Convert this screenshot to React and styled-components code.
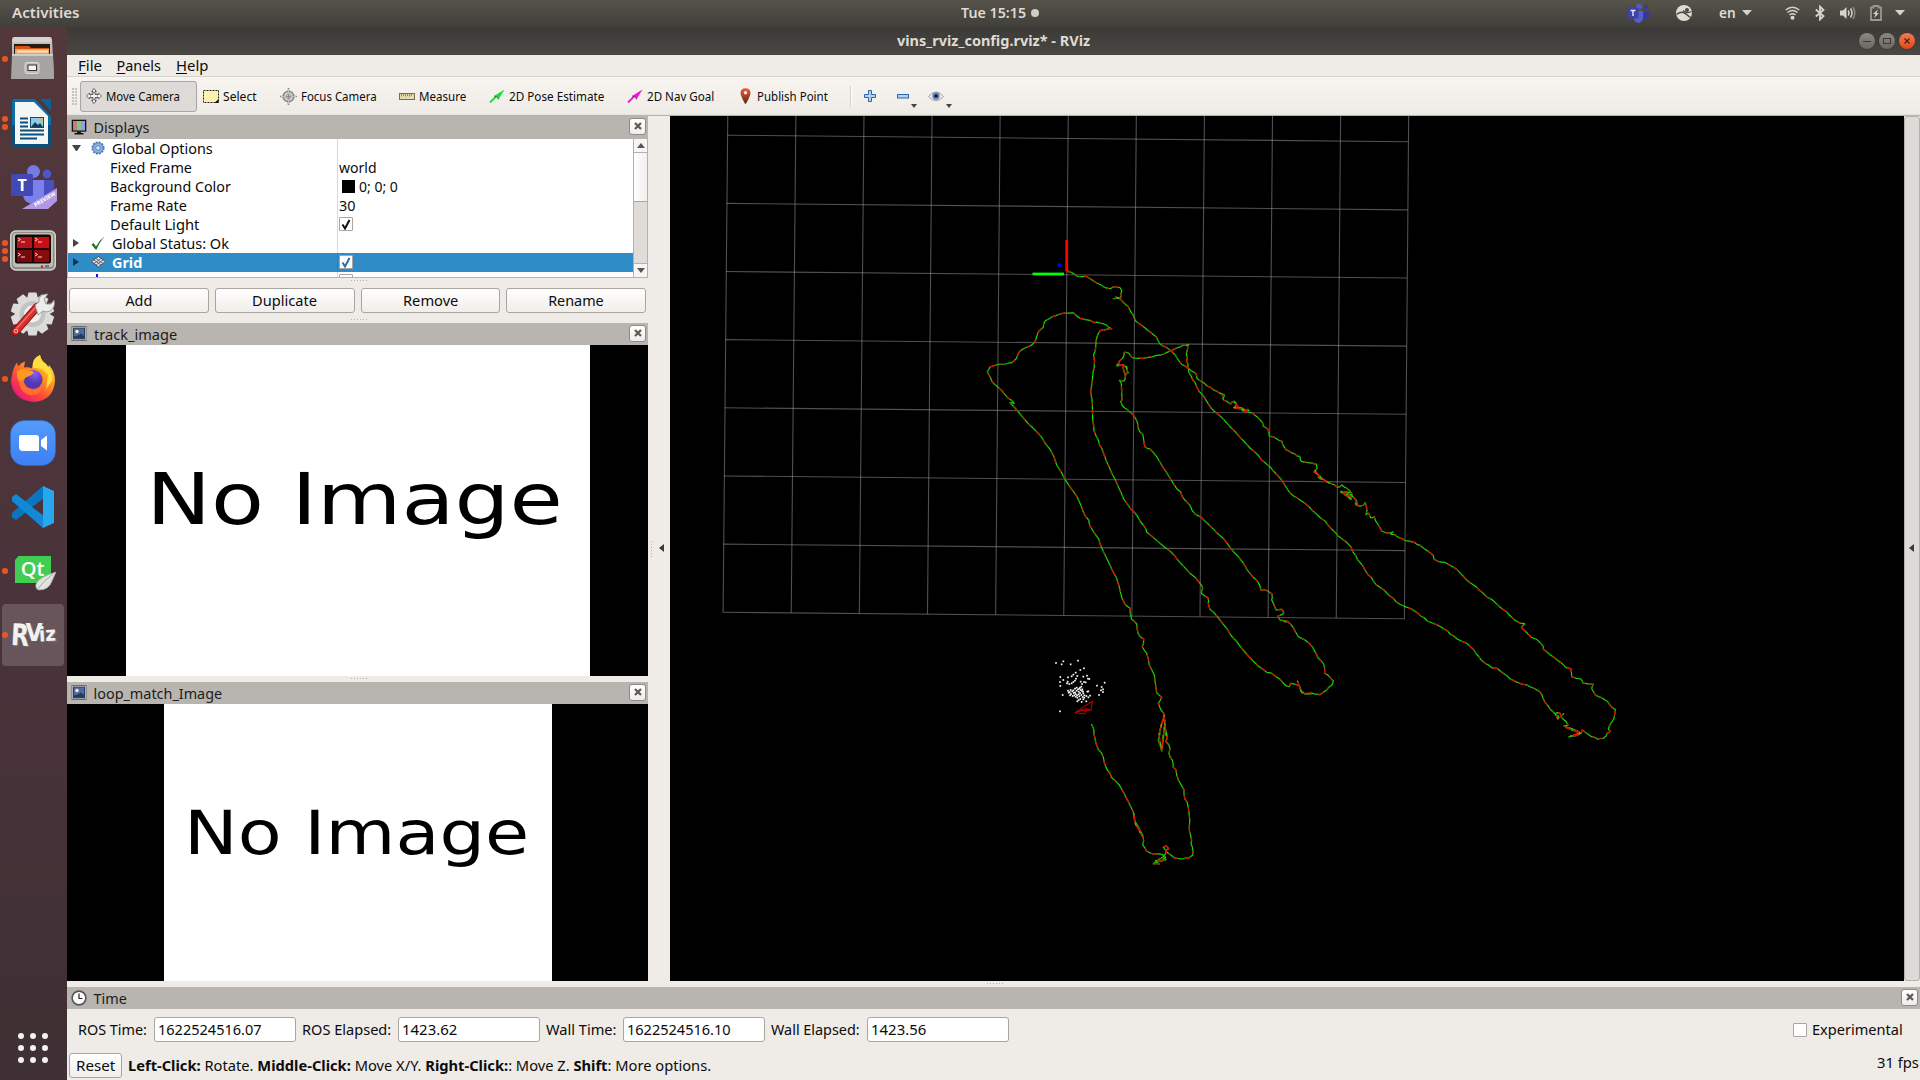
import React, { useLayoutEffect, useRef, useState } from "react";
import styled, { createGlobalStyle, css } from "styled-components";

const Global = createGlobalStyle`
  * { box-sizing: border-box; }
  html, body { margin: 0; padding: 0; background: #000; overflow: hidden; }
  body { font-family: "Noto Sans", "Open Sans", sans-serif; font-size: 14.4px; color: #0c0c0c; }
  svg { display: block; flex: none; }
`;

/* ---------- fitted text ---------- */
const FitBox = styled.span`
  display: inline-block;
  flex: none;
  white-space: pre;
  text-align: left;
`;
const FitInner = styled.span`
  display: inline-block;
  transform-origin: 0 50%;
`;
function Fit({ w, children }) {
  const ref = useRef(null);
  const [scale, setScale] = useState(1);
  useLayoutEffect(() => {
    setScale(w / ref.current.offsetWidth);
  }, [w]);
  return (
    <FitBox style={{ width: w }}>
      <FitInner ref={ref} style={{ transform: `scaleX(${scale})` }}>{children}</FitInner>
    </FitBox>
  );
}

/* ---------- shell ---------- */
const Screen = styled.div`
  width: 1920px;
  height: 1080px;
  display: flex;
  flex-direction: column;
  overflow: hidden;
`;
const TopBar = styled.header`
  height: 27px;
  flex: none;
  display: grid;
  grid-template-columns: 1fr auto 1fr;
  align-items: center;
  background: linear-gradient(#56534a, #403f3a);
  color: #dfdbd2;
  font-size: 13.6px;
  font-weight: 600;
  line-height: 24px;
  padding-bottom: 2px;
`;
const TopLeft = styled.div` padding-left: 12px; `;
const Clock = styled.div`
  display: flex;
  align-items: center;
  gap: 5px;
  margin-left: 80px;
`;
const ClockDot = styled.i`
  width: 8px; height: 8px; border-radius: 50%; background: #d0ccc4; margin-top: 1px;
`;
const Tray = styled.div`
  display: flex;
  align-items: center;
  justify-content: flex-end;
  padding: 1px 15px 0 0;
`;
const TrayItem = styled.span`
  display: flex;
  align-items: center;
  margin-right: ${(p) => p.$gap || 0}px;
`;
const Body = styled.div` flex: 1; display: flex; min-height: 0; `;

/* ---------- dock ---------- */
const Dock = styled.nav`
  width: 67px;
  flex: none;
  display: flex;
  flex-direction: column;
  background: linear-gradient(#53373a, #4a333a 55%, #3e3034);
`;
const DockItem = styled.div`
  height: 64px;
  display: flex;
  align-items: center;
`;
const Pips = styled.div`
  width: 10px;
  display: flex;
  flex-direction: column;
  align-items: center;
  gap: 2.6px;
  position: relative;
  z-index: 1;
  i { width: 5.6px; height: 5.6px; border-radius: 50%; background: #e95420; }
  padding-right: 0.5px;
`;
const DockTile = styled.div`
  width: 62px;
  height: 62px;
  margin-left: -8px;
  padding-left: 8px;
  border-radius: 4px;
  display: flex;
  align-items: center;
  background: ${(p) => (p.$active ? "rgba(255,255,255,0.17)" : "transparent")};
`;
const AppsGrid = styled.div`
  margin: auto 0 17px 18px;
  display: grid;
  grid-template-columns: repeat(3, 6px);
  gap: 6px;
  i { width: 6px; height: 6px; border-radius: 50%; background: #f4f2f0; }
`;

/* ---------- window ---------- */
const Win = styled.main`
  flex: 1;
  display: flex;
  flex-direction: column;
  background: #efebe6;
  min-width: 0;
`;
const TitleBar = styled.div`
  height: 28px;
  display: grid;
  grid-template-columns: 1fr auto 1fr;
  align-items: center;
  background: linear-gradient(#3b3a36, #4a4843);
  color: #dfdbd2;
  font-weight: 700;
  font-size: 14.2px;
  line-height: 27px;
`;
const WinButtons = styled.div`
  display: flex;
  justify-content: flex-end;
  gap: 4px;
  padding-right: 5px;
`;
const RoundBtn = styled.span`
  width: 16px; height: 16px; border-radius: 50%;
  display: flex; align-items: center; justify-content: center;
  background: ${(p) => (p.$close ? "linear-gradient(#f37b55, #df4a16)" : "linear-gradient(#8b8880, #6a6861)")};
  box-shadow: 0 0 0 0.6px #33322e;
`;
const MenuBar = styled.div`
  height: 22px;
  display: flex;
  padding: 0 0 0 10.5px;
  gap: 15px;
  line-height: 22px;
  border-bottom: 1px solid #d6d2ce;
  u { text-underline-offset: 2px; text-decoration-thickness: 1.4px; }
`;
const ToolBar = styled.div`
  height: 39px;
  padding: 1px 0 0 5px;
  display: flex;
  align-items: center;
  background: linear-gradient(#f8f5f1, #eeeae6);
  border-bottom: 1px solid #b8b4b0;
  box-shadow: inset 0 -1px 0 #e6e2de;
  font-size: 12.8px;
  line-height: 20px;
`;
const Grip = styled.div`
  width: 5px;
  height: 17px;
  margin-right: 3px;
  background-image: radial-gradient(circle at 1px 1px, #c6c1bc 0.8px, transparent 1px);
  background-size: 3px 3px;
`;
const Tool = styled.div`
  height: 31px;
  display: flex;
  align-items: center;
  gap: ${(p) => p.$gap || 4}px;
  padding-left: 5px;
  width: ${(p) => p.$w}px;
  flex: none;
  border-radius: 3px;
  border: 1px solid transparent;
  ${(p) => p.$on && css`
    background: #dedad7;
    border-color: #a9a5a1;
  `}
`;
const Separator = styled.div`
  width: 2px; height: 20px; background: #d2cdc8; border-right: 1px solid #fff; margin-right: 12px;
`;
const MiniBtn = styled.div` display: flex; align-items: center; height: 24px; margin-right: ${(p) => p.$gap}px; `;
const Drop = styled.i`
  border: 3px solid transparent; border-top: 4px solid #444; border-bottom: 0;
  align-self: flex-end; margin-bottom: 0; margin-left: 2px;
`;
const Work = styled.div` height: 871px; display: flex; padding-top: 0; `;
const Side = styled.aside` width: 581px; display: flex; flex-direction: column; `;
const PanelHead = styled.div`
  height: ${(p) => p.$h || 22}px;
  flex: none;
  display: flex;
  align-items: center;
  background: #b8b4b0;
  padding: 0 2px ${(p) => (p.$h ? 1 : 0)}px 4px;
  gap: 6px;
  color: #1d1c1b;
`;
const HeadText = styled.div` flex: 1; line-height: 20px; padding-top: 2px; padding-left: 0.5px; `;
const CloseBox = styled.span`
  width: 17px; height: 17px; border-radius: 3px;
  border: 1px solid #8f8b87;
  background: linear-gradient(#fff, #efedeb);
  display: flex; align-items: center; justify-content: center;
  margin-top: -1px;
`;
const Tree = styled.div`
  height: 139px;
  display: flex;
  background: #fff;
  border: 1px solid #b4b0ac;
  border-top: 0;
  overflow: hidden;
`;
const Rows = styled.div` flex: 1; height: 138px; overflow: hidden; `;
const Row = styled.div`
  height: 19px;
  display: flex;
  line-height: 19px;
  ${(p) => p.$sel && css` background: #308cc6; color: #fff; font-weight: 700; `}
`;
const NameCell = styled.div`
  width: 269.500px;
  display: flex;
  align-items: center;
  border-right: 1px solid ${(p) => (p.$sel ? "#2d82b8" : "#d9d9d9")};
  padding-left: ${(p) => (p.$child ? 42 : 4)}px;
  & > span { margin-top: ${(p) => (p.$sel ? 0 : 0.5)}px; }
`;
const ValueCell = styled.div` display: flex; align-items: center; padding-left: 1.5px; gap: 4px; `;
const IconSlot = styled.span` width: 16px; margin: 0 6px 0 9px; display: flex; justify-content: center; `;
const Caret = styled.i`
  width: 8px;
  display: block;
  flex: none;
  ${(p) => p.$open
    ? css` border: 4.5px solid transparent; border-top: 6px solid #444; border-bottom: 0; width: 9px; margin-right: 0; `
    : css` border: 4.5px solid transparent; border-left: 6px solid ${p.$dark ? "#12344a" : "#444"}; border-right: 0; width: 6px; margin: 0 2px 0 1px; `}
`;
const Swatch = styled.i` width: 13px; height: 13px; background: #000; margin-left: 3px; `;
const Check = styled.span`
  width: ${(p) => p.$s || 14}px; height: 14px; border: 1px solid #a9a5a1; background: #fff;
  display: flex; align-items: center; justify-content: center; border-radius: 1px;
`;
const ScrollBar = styled.div`
  width: 14px; display: flex; flex-direction: column; border-left: 1px solid #b4b0ac; background: #dedbd8;
`;
const ScrollEnd = styled.div`
  height: 14px; background: #f8f6f4; display: flex; align-items: center; justify-content: center;
  border-${(p) => (p.$down ? "top" : "bottom")}: 1px solid #b4b0ac;
  i { border: 4px solid transparent; ${(p) => (p.$down ? "border-top: 5px solid #555; border-bottom: 0;" : "border-bottom: 5px solid #555; border-top: 0;")} }
`;
const Thumb = styled.div` height: 49px; background: linear-gradient(90deg, #fff, #f2efed); border-bottom: 1px solid #aaa6a2; `;
const ScrollTrack = styled.div` flex: 1; `;
const Dots = styled.div`
  height: ${(p) => p.$h}px;
  flex: none;
  display: flex;
  justify-content: center;
  padding-top: ${(p) => p.$top || 2}px;
  i { width: 17px; height: 1px; margin-left: 3px; background: repeating-linear-gradient(90deg, #b5b0ab 0 1px, transparent 1px 3px); }
`;
const ButtonRow = styled.div` height: 25px; display: flex; gap: 6px; padding: 0 2px; `;
const Button = styled.div`
  flex: ${(p) => (p.$w ? "none" : 1)};
  width: ${(p) => (p.$w ? p.$w + "px" : "auto")};
  height: 25px;
  border: 1px solid #a9a5a1;
  border-radius: 3px;
  background: linear-gradient(#ffffff, #f0edea);
  display: flex;
  align-items: center;
  justify-content: center;
  padding-top: ${(p) => (p.$w ? 1 : 0)}px;
`;
const ImagePane = styled.div`
  height: ${(p) => p.$h}px;
  background: #000;
  display: flex;
  padding-left: ${(p) => p.$left}px;
`;
const ImageCanvas = styled.div`
  width: ${(p) => p.$w}px;
  height: 100%;
  background: #fff;
  display: flex;
  justify-content: center;
  align-items: flex-start;
  padding-top: ${(p) => p.$top}px;
  padding-right: ${(p) => p.$nudge}px;
  color: #000;
  font: ${(p) => p.$fs}px/1 "DejaVu Sans", sans-serif;
  white-space: nowrap;
  span { transform: scaleX(${(p) => p.$sx}); }
`;
const Collapse = styled.div`
  width: ${(p) => p.$w}px;
  height: 865px;
  flex: none;
  display: flex;
  align-items: center;
  padding-left: ${(p) => p.$pad}px;
  gap: 7px;
  ${(p) => p.$raised && css` background: #dedad7; border: 1px solid #b5b1ad; border-radius: 3px; `}
`;
const VDots = styled.i` width: 1px; height: 17px; margin-top: 3px; background: repeating-linear-gradient(#b5b0ab 0 1px, transparent 1px 3px); `;
const LeftArrow = styled.i` border: 4.5px solid transparent; border-right: 5.5px solid #3a3a3a; border-left: 0; `;
const View = styled.section` width: 1234px; height: 865px; background: #000; flex: none; overflow: hidden; `;
const ViewCol = styled.div` width: 1234px; display: flex; flex-direction: column; `;
const FullDots = styled(Dots)` margin-left: -584px; padding-right: 3px; `;
const TimeRow = styled.div`
  height: 40px;
  margin-top: 1px;
  display: flex;
  align-items: center;
  padding: 1px 17px 0 11px;
`;
const Field = styled.div`
  width: 142px; height: 25px; border: 1px solid #a9a5a1; border-radius: 3px; background: #fff;
  padding: 0 0 0 3px; line-height: 23px; margin: -1px 6px 0 7px; display: flex; flex: none;
`;
const Spacer = styled.div` flex: 1; `;
const CheckLabel = styled.div` display: flex; align-items: center; gap: 5px; `;
const StatusRow = styled.div` height: 31px; display: flex; align-items: center; padding: 1px 0 0 2px; gap: 6px; `;
const Fps = styled.div` padding: 0 1px 6px 0; `;

/* ---------- dock icons ---------- */
const FilesIcon = () => (
  <svg width="46" height="46" viewBox="0 0 46 46">
    <defs><linearGradient id="fi" x1="0" y1="0" x2="0" y2="1"><stop offset="0" stopColor="#c9c8c6" /><stop offset="1" stopColor="#989795" /></linearGradient></defs>
    <path d="M4 1h36q2 0 2 3l2 35q0 4-3 4H4q-3 0-2-4L2 4q0-3 2-3z" fill="url(#fi)" />
    <path d="M5 1h34l3 5H2z" fill="#d5d4d2" />
    <path d="M4 8h36v12H4z" fill="#2b1a12" />
    <path d="M5 10h14l2 2h18v7H5z" fill="#d2561c" />
    <path d="M5 13h34v6H5z" fill="#f2a452" /><path d="M7 14.500h31v2H7z" fill="#fbe3bb" />
    <path d="M2 18h41l1 25H1z" fill="#a5a4a2" /><path d="M2 18h41v2H2z" fill="#cccbc9" />
    <rect x="15" y="26.500" width="14" height="11" rx="2" fill="#bdbcba" stroke="#dddcda" />
    <rect x="18" y="29" width="8.500" height="5.500" fill="#f4f4f4" stroke="#333" />
  </svg>
);
const WriterIcon = () => (
  <svg width="46" height="48" viewBox="0 0 46 48">
    <path d="M5 0h20l16 17v28q0 3-3 3H5q-3 0-3-3V3q0-3 3-3z" fill="#0b4f7c" />
    <path d="M2 3q0-3 3-3h20l16 18v8L2 26z" fill="#0d6ea6" />
    <path d="M30 0h11v12z" fill="#0a639b" />
    <path d="M5 3h19l14 14v28H5z" fill="#f4f5f5" />
    <path d="M10 19.500h8M10 23.500h8M10 27.500h8M10 31.500h24M10 35.500h24M10 39.500h17" stroke="#0b4f7c" strokeWidth="2" />
    <rect x="20.500" y="18.500" width="13" height="10" fill="#8ccbed" stroke="#0b4f7c" />
    <path d="M21 28l4-5 3 3 2-2 3 4z" fill="#133c54" /><circle cx="31" cy="21" r="1.700" fill="#e8b73c" />
  </svg>
);
const TeamsIcon = () => (
  <svg width="48" height="46" viewBox="1 -2 48 46">
    <circle cx="38" cy="8" r="4.400" fill="#4f56c8" /><circle cx="24.500" cy="5.500" r="6.500" fill="#7479e4" />
    <path d="M32 14h13v13q-1 7-7 7l-6-3z" fill="#4a50c0" />
    <path d="M14 14h21v16q-2 8-10 8-9 0-11-8z" fill="#7b80ea" />
    <rect x="2" y="8" width="22" height="22" rx="1.500" fill="#4248b4" />
    <text x="13" y="25" fontSize="16" fontWeight="700" fill="#fff" textAnchor="middle" fontFamily="Noto Sans, sans-serif">T</text>
    <path d="M48 22v13l-9 8H13z" fill="#b197e4" />
    <text transform="translate(26.500 41) rotate(-31)" fontSize="5.400" fontWeight="700" fill="#fff" fontFamily="Noto Sans, sans-serif">PREVIEW</text>
  </svg>
);
const TerminatorIcon = () => (
  <svg width="46" height="42" viewBox="0 0 46 42">
    <rect x="0.800" y="1" width="44.500" height="39" rx="5" fill="#8b8e85" stroke="#d4d5cf" strokeWidth="1.500" />
    <rect x="3" y="3" width="40" height="34" rx="3" fill="#bfc1b9" />
    <rect x="5" y="4.500" width="36" height="29" rx="2" fill="#1c0505" />
    <rect x="7" y="7" width="15" height="11" fill="#b5141a" /><rect x="24" y="7" width="15" height="11" fill="#c90f14" />
    <rect x="7" y="20" width="15" height="12" fill="#760b0d" /><rect x="24" y="20" width="15" height="12" fill="#8b0b0d" />
    <g stroke="#f0d5d5" strokeWidth="1" fill="none">
      <path d="M8 8l2.500 1.500L8 11M11 12h4M25 8l2.500 1.500L25 11M28 12h4M8 23l2.500 1.500L8 26M11 27h4M25 23l2.500 1.500L25 26M28 27h4" />
    </g>
    <circle cx="32" cy="36.500" r="1.200" fill="#e01616" /><rect x="35" y="35" width="4" height="2.500" fill="#777" />
  </svg>
);
const SettingsIcon = () => {
  const teeth = Array.from({ length: 10 }, (_, i) => i * 36);
  return (
    <svg width="46" height="46" viewBox="0 1 46 46">
      <g fill="#dcdcda">
        {teeth.map((a) => <path key={a} d="M18.500 1.500h8l1.500 6h-11z" transform={`rotate(${a} 22.500 23)`} />)}
        <circle cx="22.500" cy="23" r="17" />
      </g>
      <circle cx="22.500" cy="23" r="13" fill="#c3c3c1" /><circle cx="22.500" cy="23" r="8.500" fill="#f1f1f0" />
      <path d="M5 41L27 16" stroke="#8f1414" strokeWidth="8" strokeLinecap="round" />
      <path d="M5.500 40.500L27 16" stroke="#d8302a" strokeWidth="6" strokeLinecap="round" />
      <path d="M7 37L25 17" stroke="#ee726a" strokeWidth="1.500" strokeLinecap="round" />
      <path d="M25 14l4-3q-1-7 7-8l2 0-4 5 2 5 5 0 3-4q2 7-4 11-4 2-7 0l-5 4z" fill="#ececec" stroke="#8c8c8c" strokeWidth="0.800" />
      <circle cx="6" cy="40" r="1.700" fill="none" stroke="#f3b0aa" />
    </svg>
  );
};
const FirefoxIcon = () => (
  <svg width="46" height="48" viewBox="0 1.500 46 48">
    <defs>
      <linearGradient id="ff" x1="1" y1="0.100" x2="0.300" y2="1"><stop offset="0" stopColor="#fff04a" /><stop offset="0.350" stopColor="#ffa21e" /><stop offset="0.700" stopColor="#ff4a3a" /><stop offset="1" stopColor="#ee1773" /></linearGradient>
      <radialGradient id="fp" cx="0.600" cy="0.200"><stop offset="0" stopColor="#8b5cf6" /><stop offset="1" stopColor="#5239b0" /></radialGradient>
    </defs>
    <path d="M2 22Q3 14 7 9l1 4q3-4 7-5l-1 6q4-1 8 1Q22 6 30 1.500q1 6 6 9l2 4 1-3q6 7 6 15-1 21-22 22Q2 46 1 27z" fill="url(#ff)" />
    <path d="M23 9q1-5 7-7.500 1 6 6 9 8 8 6 17l-6 8 2-14q-5-8-15-7z" fill="#ffdf3d" />
    <circle cx="23" cy="26" r="9.500" fill="url(#fp)" />
    <path d="M7 18q5-4 12-1 4 0 5 2-2 3-6 4-4 1-4 5l-1 4q-7-5-6-14z" fill="#ff9a20" />
    <path d="M14 25q-1 9 8 11 9 0 11-6-1 11-11 12-12-2-13-13z" fill="#ff702d" />
  </svg>
);
const ZoomIcon = () => (
  <svg width="46" height="46" viewBox="0 0 46 46">
    <defs><linearGradient id="zg" x1="0" y1="0" x2="0" y2="1"><stop offset="0" stopColor="#529cfb" /><stop offset="1" stopColor="#3e7ff2" /></linearGradient></defs>
    <rect x="0.500" y="0.500" width="45" height="45" rx="14" fill="url(#zg)" stroke="#2d69c8" strokeWidth="0.600" />
    <path d="M11 15h15q3 0 3 3v13H13q-4 0-4-4V17q0-2 2-2z" fill="#fff" /><path d="M31 20l6-4.500v15L31 26z" fill="#fff" />
  </svg>
);
const CodeIcon = () => (
  <svg width="46" height="44" viewBox="0 0 46 44">
    <path d="M33 1l11 5v32l-11 5z" fill="#27a7ee" />
    <path d="M33 1L2 28v4l4 3 27-21z" fill="#0a76c2" /><path d="M33 43L2 16v-4l4-3 27 21z" fill="#1289d6" />
    <path d="M33 14v16L22 22z" fill="#4a333a" />
  </svg>
);
const QtIcon = () => (
  <svg width="48" height="40" viewBox="0 0 48 40">
    <path d="M8.500 5h32.500v22l-5 5H5V9z" fill="#41cd52" />
    <text x="22.500" y="25" fontSize="20" fill="#fff" textAnchor="middle" fontFamily="Open Sans, sans-serif" fontWeight="600">Qt</text>
    <path d="M46 21q-17 5-20 12-1 5 3 6 10 0 13-9z" fill="#e2e2e0" stroke="#a5a5a3" strokeWidth="0.700" /><path d="M27 39q6-9 16-16" stroke="#9a9a98" fill="none" strokeWidth="0.800" />
  </svg>
);
const RvizIcon = () => (
  <svg width="52" height="46" viewBox="-1 -3 52 46">
    <g fontFamily="DejaVu Sans, sans-serif" fontWeight="700">
      {[["#77706f", 1.3], ["#f2f2f0", 0]].map(([c, o]) => (
        <g key={c} fill={c} transform={`translate(${o} ${o * 0.7})`}>
          <text x="0" y="30.500" fontSize="30" transform="rotate(3 9 20)" textLength="18" lengthAdjust="spacingAndGlyphs">R</text>
          <text x="14.500" y="25.500" fontSize="25" textLength="17" lengthAdjust="spacingAndGlyphs">V</text>
          <text x="28" y="26" fontSize="20" transform="rotate(-3 36 20)" textLength="17" lengthAdjust="spacingAndGlyphs">iz</text>
        </g>
      ))}
    </g>
  </svg>
);
const dock = [
  [1, FilesIcon], [2, WriterIcon], [0, TeamsIcon], [3, TerminatorIcon], [0, SettingsIcon],
  [1, FirefoxIcon], [0, ZoomIcon], [0, CodeIcon], [1, QtIcon], [1, RvizIcon, true],
];

/* ---------- tray icons ---------- */
const TrayTeams = () => (
  <svg width="23" height="20" viewBox="0 0 23 20">
    <circle cx="12" cy="3.500" r="3" fill="#5558c4" /><circle cx="19" cy="4" r="2" fill="#333a9c" />
    <path d="M15 8h7v5q-1 4-5 3z" fill="#343a9d" /><path d="M7 8h9v7q-1 5-5 5-4-1-4-5z" fill="#5a5ecb" />
    <rect x="0.500" y="4.500" width="11" height="11" rx="1" fill="#3d41a8" /><path d="M3.500 7.500h5M6 7.500v5.500" stroke="#e8e8ff" strokeWidth="1.400" />
  </svg>
);
const TrayGlobe = () => (
  <svg width="16" height="16" viewBox="0 0 16 16">
    <circle cx="8" cy="8" r="8" fill="#dfdbd2" />
    <path d="M0.500 9.500q4.500-3.500 8-1.500l6.500 5" stroke="#4a4842" strokeWidth="1.500" fill="none" />
    <circle cx="11" cy="5" r="2" fill="#4a4842" /><path d="M7 5.500q4 3.500 8.500 1" stroke="#4a4842" strokeWidth="1.200" fill="none" />
  </svg>
);
const Down = () => <svg width="10" height="6" viewBox="0 0 10 6"><path d="M0 0h10L5 5.500z" fill="#d8d4cc" /></svg>;
const Wifi = () => (
  <svg width="15" height="14" viewBox="0 0 15 14" fill="none" stroke="#d8d4cc" strokeWidth="1.500">
    <path d="M0.700 4Q7.500-1.500 14.300 4M2.500 6.500q5-4 10 0M4.500 9q3-2.300 6 0" /><circle cx="7.500" cy="11.800" r="1.300" fill="#d8d4cc" />
  </svg>
);
const Bt = () => (
  <svg width="10" height="16" viewBox="0 0 10 16" fill="none" stroke="#d8d4cc" strokeWidth="1.800"><path d="M0.800 4.500L8.500 11 5 14.500v-13L8.500 5 0.800 11.500" /></svg>
);
const Vol = () => (
  <svg width="16" height="14" viewBox="0 0 16 14" fill="none" strokeWidth="1.500">
    <path d="M0 4.500h3L6.500 1v12L3 9.500H0z" fill="#d8d4cc" /><path d="M8.300 4.500q1.500 2.500 0 5M10.500 2.500q3 4.500 0 9" stroke="#d8d4cc" /><path d="M13 1q3.500 6 0 12" stroke="#8b8880" />
  </svg>
);
const Batt = () => (
  <svg width="12" height="16" viewBox="0 0 12 16"><path d="M3.500 2.500V1h5v1.500H11V15H1V2.500z" fill="none" stroke="#9a978f" strokeWidth="1.800" /><path d="M8 4.500L3 9h2.500L4 13l5-4.800H6.500z" fill="#d8d4cc" /></svg>
);

/* ---------- toolbar icons ---------- */
const MoveIcon = () => (
  <svg width="16" height="16" viewBox="0 0 16 16" fill="#f6f6f6" stroke="#555" strokeWidth="0.900">
    <path d="M8 0.500l2.300 3H9v3h3.500V5L15.500 8l-3 3V9.500H9v3h1.300L8 15.500l-2.300-3H7v-3H3.500V11L0.500 8l3-3v1.500H7v-3H5.700z" /><circle cx="8" cy="8" r="3.700" fill="none" stroke="#777" strokeWidth="0.700" />
  </svg>
);
const SelectIcon = () => (
  <svg width="16" height="13" viewBox="0 0 16 13"><rect x="0.500" y="0.500" width="15" height="12" fill="#fdf3ac" stroke="#222" strokeDasharray="2 1" /><path d="M15.500 9v4H11.500z" fill="#111" /></svg>
);
const FocusIcon = () => (
  <svg width="17" height="17" viewBox="0 0 17 17" fill="none" stroke="#8b8b89">
    <circle cx="8.500" cy="8.500" r="5.200" strokeWidth="1.800" /><circle cx="8.500" cy="8.500" r="2.800" strokeWidth="0.800" /><path d="M8.500 0v17M0 8.500h17" strokeWidth="1.600" /><path d="M8.500 1v5M8.500 11v5M1 8.500h5M11 8.500h5" stroke="#e6e6e4" strokeWidth="0.600" />
  </svg>
);
const MeasureIcon = () => (
  <svg width="16" height="7" viewBox="0 0 16 7"><rect x="0.500" y="0.500" width="15" height="6" fill="#e5dcae" stroke="#6f6c60" /><path d="M2.500 1v2.500M4.500 1v2M6.500 1v2.500M8.500 1v2M10.500 1v2.500M12.500 1v2" stroke="#77735f" strokeWidth="0.800" /></svg>
);
const ArrowIcon = ({ c }) => (
  <svg width="16" height="14" viewBox="0 0 16 14"><path d="M1 13.500L7 7.500" stroke={c} strokeWidth="1.800" /><path d="M5 7L15.500 0.500 9.500 10.500 8.200 8z" fill={c} /><path d="M5 7l3.200 1 1.300 2.500" stroke="#333" strokeWidth="0.600" fill="none" /></svg>
);
const PinIcon = () => (
  <svg width="11" height="16" viewBox="0 0 11 16"><defs><linearGradient id="pn" x1="0" y1="0" x2="0" y2="1"><stop offset="0" stopColor="#ee5a36" /><stop offset="1" stopColor="#5b2a14" /></linearGradient></defs><path d="M5.500 0.300q5 0 5 5Q10 9 6 15.700H5Q1 9 0.500 5.300q0-5 5-5z" fill="url(#pn)" /><circle cx="5.500" cy="4.800" r="1.700" fill="#f7ebe6" /></svg>
);
const PlusIcon = () => <svg width="12" height="12" viewBox="0 0 12 12"><path d="M4.500 0.500h3v4h4v3h-4v4h-3v-4h-4v-3h4z" fill="#b5d0ec" stroke="#2f67aa" /></svg>;
const MinusIcon = () => <svg width="12" height="5" viewBox="0 0 12 5"><rect x="0.500" y="0.500" width="11" height="3.500" fill="#b5d0ec" stroke="#2f67aa" /></svg>;
const EyeIcon = () => <svg width="16" height="11" viewBox="0 0 16 11"><path d="M0.500 5.500Q8-3.500 15.500 5.500 8 14 0.500 5.500z" fill="#efefef" stroke="#a0a0a0" /><circle cx="8" cy="5" r="3.800" fill="#6d84bd" /><circle cx="8" cy="5" r="1.800" fill="#121a33" /></svg>;

/* ---------- panel icons ---------- */
const MonitorIcon = () => (
  <svg width="16" height="16" viewBox="0 0 16 16"><rect x="0.700" y="0.700" width="14.600" height="12" fill="#111" /><path d="M2 2h4v9.500H2z" fill="#c77c7c" /><path d="M6 2h4v9.500H6z" fill="#7dc68a" /><path d="M10 2h4v9.500h-4z" fill="#9d9be0" /><path d="M6 12.500h4v1.500h2.500V15.500h-9V14H6z" fill="#111" /></svg>
);
const PictureIcon = () => (
  <svg width="16" height="15" viewBox="0 0 16 15"><rect x="1" y="0.500" width="14" height="14" fill="#f5f5f5" stroke="#6d6d6d" /><rect x="2.500" y="2" width="11" height="11" fill="#4d6c9f" stroke="#263c62" /><path d="M3 12.500v-2l4-1 3-2 3 2.500v2.500z" fill="#283a58" /><circle cx="6" cy="5.500" r="1.700" fill="#fff6c0" /></svg>
);
const ClockIcon = () => <svg width="16" height="16" viewBox="0 0 16 16"><circle cx="8" cy="8" r="6.900" fill="#fff" stroke="#555" strokeWidth="1.600" /><path d="M8 3.500V8.500h3.500" stroke="#222" fill="none" strokeWidth="1.200" /></svg>;
const GearIcon = () => <svg width="14" height="14" viewBox="0 0 14 14"><circle cx="7" cy="7" r="5.700" fill="#7fa6d6" stroke="#4b7ab8" strokeWidth="1.800" strokeDasharray="1.900 1.080" /><circle cx="7" cy="7" r="4.900" fill="#8fb2de" stroke="#4b7ab8" strokeWidth="0.600" /><circle cx="7" cy="7" r="2.300" fill="#d8e5f4" stroke="#4b7ab8" strokeWidth="0.900" /></svg>;
const OkIcon = () => <svg width="14" height="14" viewBox="0 0 14 14"><path d="M0.500 8.500l2-1.500L5 10.500Q8 4.500 13.500 0.500 8.500 6 5.500 13.500h-1z" fill="#17751c" /></svg>;
const GridIcon = () => <svg width="15" height="12" viewBox="0 0 15 12"><path d="M7.500 0.500l7 5-7 5.500-7-5.500z" fill="#dfe3e8" stroke="#4b4f55" strokeWidth="1" /><path d="M5 2.500l7 5M3 4l7 5M10 2.500l-7 5M12.200 4l-7 5" stroke="#4b4f55" strokeWidth="0.800" /></svg>;
const Tick = ({ c = "#111" }) => <svg width="10" height="11" viewBox="0 0 10 11"><path d="M1.500 5.500l2.500 4 4.500-8.500" fill="none" stroke={c} strokeWidth="2" /></svg>;
const CrossGlyph = () => <svg width="8" height="8" viewBox="0 0 8 8"><path d="M1 1l6 6M7 1L1 7" stroke="#5f5b57" strokeWidth="2.300" /></svg>;

/* ---------- 3D scene ---------- */
const TRACK = [
  [0, 0, "323,150 330,156 342,162 352,169 378,169 392,177 410,189 432,201 450,206 466,201 480,203 485,214 484,227 478,234 468,231 460,236 476,235 486,243 505,260 514,278 521,290 527,303 545,316 565,332 582,346 593,359 600,372 615,380 630,391 645,404 655,420 666,434 680,442 693,452 708,461 711,475 722,483 740,497 760,509 778,519 793,524 788,535 800,544 812,552 822,544 830,556 822,563 846,563 850,574 864,568 855,575 878,580 893,592 907,607 910,619 924,628 928,649 945,653 966,664 972,680 988,694 1005,702 1020,710 1024,724 1045,728 1070,733 1072,745 1062,756 1080,768 1075,772 1090,778 1110,790"],
  [1020, 690, "112,112 125,105 140,115 155,130 152,148 122,124 148,128 135,136 155,138 168,150 168,165 180,169 196,158 200,175 198,194 206,190 212,203 222,200 228,215 238,230 245,243 262,250 280,246 272,252 285,254 300,264 315,271 345,278 360,286 380,301 395,312 402,328 415,334 432,336 450,346 470,358 490,379 510,398 530,412 548,428 562,442 582,454 602,473 620,486 635,502 650,514 674,521 665,532 675,543 692,560 710,568 725,583 730,598 750,614 775,632 795,650 812,656 815,680 843,687 848,699 880,703 875,716 886,735 905,743 922,754 935,771 946,778 944,792 936,815 925,836 931,842 922,850 910,865 893,868 875,860 860,850 847,840 843,850 825,858 806,861 840,848 825,840 805,833 792,827 804,826 790,808 780,790 768,789 773,806 766,792 750,777 735,757 725,733 710,719 690,710 665,702 630,686 610,670 592,655 575,653 555,640 535,618 520,598 500,580 470,566 450,552 432,537 410,524 382,513 362,498 345,484 325,473 310,467 290,457 265,434 240,412 220,393 205,375 190,350 172,328 160,308 153,291 140,277 115,258 95,238 75,213 50,193 25,168 0,150"],
  [0, 0, "1000,827 985,812 965,780 940,753 920,733 895,706 870,684 840,652 810,620 785,592 762,573 748,556 730,527 710,500 698,480 688,460 684,440 680,425 679,400 683,385 686,374 670,376 650,384 630,394 612,402 590,406 565,412 535,415 516,412 507,400 493,397 490,412 478,424 470,438 490,434 500,445 505,458 497,466 488,440 496,468 492,483 478,481 484,490 486,540 482,545 487,557 500,568 520,585 528,598 534,620 540,636 548,643 552,665 556,682 570,687 590,710 610,743 632,778 650,806 662,816 672,837 690,856 705,882 725,893 745,913 770,938 790,955 810,982 835,1010 862,1050"],
  [180, 1020, "700,52 715,68 722,90 745,94 756,102 755,120 768,150 785,148 791,160 774,168 780,180 797,187 788,181 800,183 820,203 835,230 855,240 877,260 895,295 911,312 914,340 930,352 940,362 936,375 920,390 900,404 870,398 875,402 855,403 843,392 838,376 812,370 808,380 798,377 780,358 752,338 740,337 715,318 685,288 650,245 620,205 592,170 570,148 565,130 564,113 545,101 548,85 540,70 510,40 473,0"],
  [0, 0, "630,993 600,970 560,936 552,918 535,893 515,870 490,835 475,800 455,760 440,725 425,685 415,660 402,632 398,600 397,545 392,515 397,480 403,440 401,405 408,370 413,345 422,331 440,328 455,326 440,316 420,309 402,308 390,301 360,295 340,278 318,279 290,286 268,296 255,304 250,322 238,332 230,350 222,369 200,382 178,395 168,417 155,428 115,433 90,441 82,455 92,475 103,492 125,512 145,535 163,550 150,548 170,570 195,600 220,625 245,652 270,688 290,735 315,778 350,828 370,875 386,900 390,918 417,958 425,983 440,1015 455,1047"],
  [180, 1020, "290,55 302,100 315,133 330,145 335,178 350,192 355,222 371,237 367,260 380,280 388,315 403,345 410,398 425,412 415,430 433,463 434,490 425,573 415,540 420,510 433,470 438,520 442,535 438,545 450,565 447,580 457,600 460,622 468,630 475,660 492,690 495,718 502,728 508,765 508,800 513,830 513,850 519,870 518,885 508,893 485,897 462,893 445,880 436,872 446,866 438,857 430,862 440,874 430,890 408,903 400,912 418,912 407,906 438,900 428,884 400,882 380,873 368,855 370,830 355,800 342,775 340,757 325,725 298,675 275,653 262,630 250,592 235,568 225,535 222,510 214,492"],
];
let seed = 7;
const rnd = () => { seed = (seed * 16807) % 2147483647; return seed / 2147483647 - 0.5; };
const base = TRACK.flatMap(([dx, dy, s]) => s.split(" ").map((p) => { const [x, y] = p.split(",").map(Number); return [x + dx, y + dy]; }));
const trackPoints = base.flatMap(([x, y], i) => {
  const n = base[i + 1];
  if (!n) return [[x, y]];
  return [[x, y], [(x + n[0]) / 2 + rnd() * 4, (y + n[1]) / 2 + rnd() * 4]];
}).map(([x, y]) => `${(x / 3 + 290).toFixed(1)},${(y / 3 + 104).toFixed(1)}`).join(" ");

const SPIKES = [
  "822,546 835,560 822,562 862,575 845,565 868,572", "1064,750 1085,775 1072,765 1110,790", "1142,816 1175,838 1155,818 1178,826",
  "613,1485 597,1540 604,1590 616,1500", "614,1510 622,1555 616,1542",
  "585,1922 600,1925 618,1910", "522,1780 526,1812 550,1855", "1812,1480 1793,1498 1796,1486", "1830,1548 1862,1540 1815,1522",
  "1185,850 1195,858 1190,843", "780,518 790,530", "470,432 500,440 503,462", "1012,1382 1020,1405 1026,1420 1045,1420",
].map((s) => s.split(" ").map((p) => { const [x, y] = p.split(",").map(Number); return `${x / 3 + 290},${y / 3 + 104}`; }).join(" "));

const CLOUD = "108,309 125,313 130,304 152,313 174,302 192,325 181,330 167,338 121,351 130,360 144,352 155,349 160,344 172,348 168,356 143,365 148,372 141,370 120,366 121,378 155,370 160,366 165,362 190,350 192,366 201,347 204,356 208,357 197,367 186,372 182,365 128,405 144,392 149,396 152,390 157,394 153,402 160,391 161,399 165,386 165,397 170,392 174,388 176,395 180,383 184,380 187,388 186,393 180,399 176,403 171,406 167,410 163,406 172,413 178,409 184,405 190,400 188,411 193,406 193,413 199,408 205,412 210,407 205,394 202,395 176,420 181,417 185,426 172,424 190,418 199,424 150,406 158,408 231,377 245,381 254,368 249,388 243,391 249,396 237,405 120,454 167,402 182,390 178,386 170,383 189,395 146,398"
  .split(" ").map((p) => p.split(",").map(Number));

function Scene() {
  const v = Array.from({ length: 11 }, (_, k) => k);
  const h = Array.from({ length: 8 }, (_, j) => j);
  return (
    <svg width="1234" height="865" viewBox="670 116 1234 865">
      <g stroke="#a0a0a4" strokeOpacity="0.5" strokeWidth="1.100">
        {v.map((k) => {
          const xa = 726.8 + 68.1 * k, xb = 723.5 + 68.13 * k, s = (xb - xa) / 350, yb = 612 + 0.67 * k;
          return <line key={k} x1={xa - s * 104} y1="116" x2={xa + s * (yb - 220)} y2={yb} />;
        })}
        {h.map((j) => <line key={j} x1={727.3 - j * 0.67} y1={135.2 + 68.15 * j} x2={1408 - j * 0.47} y2={141.7 + 68.15 * j} />)}
      </g>
      <line x1="1066.700" y1="240" x2="1066.700" y2="271.500" stroke="#f00" strokeWidth="2.800" />
      <line x1="1032.500" y1="274" x2="1064" y2="274" stroke="#0f0" strokeWidth="2.800" />
      <circle cx="1059.200" cy="265" r="2" fill="#00f" />
      <g transform="translate(670 116)" fill="none" strokeWidth="1.200" strokeLinejoin="round">
        <polyline points={trackPoints} stroke="#14de00" />
        <polyline points={trackPoints} stroke="#1c8a00" strokeDasharray="5 8 3 11 4 7" />
        <polyline points={trackPoints} stroke="#cc1000" strokeWidth="1.400" strokeDasharray="4 5 2 8 7 4 4 11 2 4 6 7" />
        {SPIKES.map((p, i) => <polyline key={i} points={p} stroke="#e01000" />)}
        {SPIKES.map((p, i) => <polyline key={"g" + i} points={p} stroke="#18d800" strokeDasharray="2 7 4 6" />)}
      </g>
      <g transform="translate(1020 560) scale(0.33333)">
        <path d="M165 458L217 424L213 450L197 452L195 462L165 458L200 446L213 450M182 448L197 452" fill="none" stroke="#b80000" strokeWidth="3.200" />
        {CLOUD.map(([x, y], i) => <rect key={i} x={x - 2.5} y={y - 2.5} width="5" height="5" fill="#fff" />)}
      </g>
    </svg>
  );
}

/* ---------- composition ---------- */
const Head = ({ icon, title, w, h }) => (
  <PanelHead $h={h}>{icon}<HeadText><Fit w={w}>{title}</Fit></HeadText><CloseBox><CrossGlyph /></CloseBox></PanelHead>
);
const Prop = ({ name, w, children }) => (
  <Row><NameCell $child><Fit w={w}>{name}</Fit></NameCell><ValueCell>{children}</ValueCell></Row>
);
const tools = [
  ["Move Camera", 74, MoveIcon, 117, true], ["Select", 34, SelectIcon, 77], ["Focus Camera", 76, FocusIcon, 119],
  ["Measure", 47, MeasureIcon, 90], ["2D Pose Estimate", 95, () => <ArrowIcon c="#14e03a" />, 138],
  ["2D Nav Goal", 67, () => <ArrowIcon c="#ee18d8" />, 113], ["Publish Point", 71, PinIcon, 116, false, 6],
];

export default function App() {
  return (
    <Screen>
      <Global />
      <TopBar>
        <TopLeft><Fit w={68}>Activities</Fit></TopLeft>
        <Clock><Fit w={65}>Tue 15:15</Fit><ClockDot /></Clock>
        <Tray>
          <TrayItem $gap={26}><TrayTeams /></TrayItem>
          <TrayItem $gap={27}><TrayGlobe /></TrayItem>
          <TrayItem $gap={6}><Fit w={17}>en</Fit></TrayItem>
          <TrayItem $gap={33}><Down /></TrayItem>
          <TrayItem $gap={15}><Wifi /></TrayItem>
          <TrayItem $gap={15}><Bt /></TrayItem>
          <TrayItem $gap={14}><Vol /></TrayItem>
          <TrayItem $gap={13}><Batt /></TrayItem>
          <TrayItem><Down /></TrayItem>
        </Tray>
      </TopBar>
      <Body>
        <Dock>
          {dock.map(([n, Icon, active], i) => (
            <DockItem key={i}>
              <Pips>{Array.from({ length: n }, (_, k) => <i key={k} />)}</Pips>
              <DockTile $active={active}><Icon /></DockTile>
            </DockItem>
          ))}
          <AppsGrid>{Array.from({ length: 9 }, (_, k) => <i key={k} />)}</AppsGrid>
        </Dock>
        <Win>
          <TitleBar>
            <span />
            <Fit w={193}>vins_rviz_config.rviz* - RViz</Fit>
            <WinButtons>
              <RoundBtn><svg width="8" height="8"><path d="M0 4.500h8" stroke="#3a3935" /></svg></RoundBtn>
              <RoundBtn><svg width="8" height="8"><rect x="0.500" y="1.500" width="7" height="5" fill="none" stroke="#3a3935" /></svg></RoundBtn>
              <RoundBtn $close><svg width="8" height="8"><path d="M1.500 1.500l5 5M6.500 1.500l-5 5" stroke="#4a2110" strokeWidth="1.200" /></svg></RoundBtn>
            </WinButtons>
          </TitleBar>
          <MenuBar>
            <Fit w={24}><u>F</u>ile</Fit><Fit w={44}><u>P</u>anels</Fit><Fit w={32}><u>H</u>elp</Fit>
          </MenuBar>
          <ToolBar>
            <Grip />
            {tools.map(([label, w, Icon, width, on, gap]) => (
              <Tool key={label} $w={width} $on={on} $gap={gap}><Icon /><Fit w={w}>{label}</Fit></Tool>
            ))}
            <Separator />
            <MiniBtn $gap={21}><PlusIcon /></MiniBtn>
            <MiniBtn $gap={11}><MinusIcon /><Drop /></MiniBtn>
            <MiniBtn $gap={0}><EyeIcon /><Drop /></MiniBtn>
          </ToolBar>
          <Work>
            <Side>
              <Head h={23} icon={<MonitorIcon />} title="Displays" w={56} />
              <Tree>
                <Rows>
                  <Row><NameCell><Caret $open /><IconSlot><GearIcon /></IconSlot><Fit w={101}>Global Options</Fit></NameCell></Row>
                  <Prop name="Fixed Frame" w={82}><Fit w={38}>world</Fit></Prop>
                  <Prop name="Background Color" w={121}><Swatch /><Fit w={39}>0; 0; 0</Fit></Prop>
                  <Prop name="Frame Rate" w={77}><Fit w={16}>30</Fit></Prop>
                  <Prop name="Default Light" w={89}><Check><Tick /></Check></Prop>
                  <Row><NameCell><Caret /><IconSlot><OkIcon /></IconSlot><Fit w={117}>Global Status: Ok</Fit></NameCell></Row>
                  <Row $sel><NameCell $sel><Caret $dark /><IconSlot><GridIcon /></IconSlot><Fit w={30}>Grid</Fit></NameCell><ValueCell><Check><Tick c="#2c6ea8" /></Check></ValueCell></Row>
                  <Row><NameCell><Caret $dark /><IconSlot><svg width="14" height="14"><path d="M6 0v14" stroke="#1010e0" strokeWidth="2" /></svg></IconSlot></NameCell><ValueCell><Check /></ValueCell></Row>
                </Rows>
                <ScrollBar><ScrollEnd><i /></ScrollEnd><Thumb /><ScrollTrack /><ScrollEnd $down><i /></ScrollEnd></ScrollBar>
              </Tree>
              <Dots $h={10}><i /></Dots>
              <ButtonRow>
                <Button><Fit w={27}>Add</Fit></Button><Button><Fit w={65}>Duplicate</Fit></Button>
                <Button><Fit w={55}>Remove</Fit></Button><Button><Fit w={56}>Rename</Fit></Button>
              </ButtonRow>
              <Dots $h={10} $top={6}><i /></Dots>
              <Head icon={<PictureIcon />} title="track_image" w={83} />
              <ImagePane $h={331} $left={59}><ImageCanvas $w={464} $top={119.7} $fs={71.3} $sx={1.215} $nudge={6.5}><span>No Image</span></ImageCanvas></ImagePane>
              <Dots $h={6}><i /></Dots>
              <Head icon={<PictureIcon />} title="loop_match_Image" w={129} />
              <ImagePane $h={277} $left={97}><ImageCanvas $w={388} $top={100.6} $fs={59.7} $sx={1.202} $nudge={3}><span>No Image</span></ImageCanvas></ImagePane>
            </Side>
            <Collapse $w={22} $pad={3}><VDots /><LeftArrow /></Collapse>
            <ViewCol>
              <View><Scene /></View>
              <FullDots $h={6}><i /></FullDots>
            </ViewCol>
            <Collapse $w={16} $pad={4} $raised><LeftArrow /></Collapse>
          </Work>
          <Head icon={<ClockIcon />} title="Time" w={33} />
          <TimeRow>
            <Fit w={69}>ROS Time:</Fit><Field><Fit w={104}>1622524516.07</Fit></Field>
            <Fit w={89}>ROS Elapsed:</Fit><Field><Fit w={55}>1423.62</Fit></Field>
            <Fit w={70}>Wall Time:</Fit><Field><Fit w={104}>1622524516.10</Fit></Field>
            <Fit w={89}>Wall Elapsed:</Fit><Field><Fit w={55}>1423.56</Fit></Field>
            <Spacer /><CheckLabel><Check /><Fit w={91}>Experimental</Fit></CheckLabel>
          </TimeRow>
          <StatusRow>
            <Button $w={53}><Fit w={39}>Reset</Fit></Button>
            <Fit w={583}><b>Left-Click:</b> Rotate. <b>Middle-Click:</b> Move X/Y. <b>Right-Click:</b>: Move Z. <b>Shift</b>: More options.</Fit>
            <Spacer /><Fps><Fit w={42}>31 fps</Fit></Fps>
          </StatusRow>
        </Win>
      </Body>
    </Screen>
  );
}
